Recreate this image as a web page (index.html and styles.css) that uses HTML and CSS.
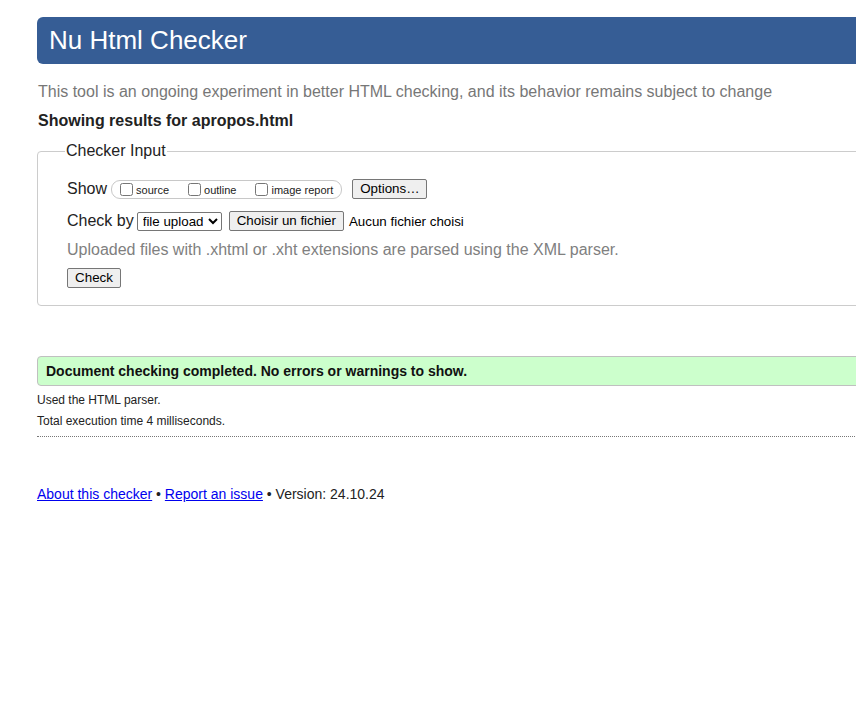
FILE: index.html
```html
<!DOCTYPE html>
<html lang="en">
<head>
<meta charset="utf-8">
<title>Nu Html Checker</title>
<link rel="stylesheet" href="styles.css">
</head>
<body>
<div class="page">
  <h1 class="banner">Nu Html Checker</h1>
  <p class="intro">This tool is an ongoing experiment in better HTML checking, and its behavior remains subject to change</p>
  <h2 class="results-for">Showing results for apropos.html</h2>
  <fieldset class="checker">
    <legend class="legend">Checker Input</legend>
    <div class="row row-show">
      <span class="row-label">Show</span>
      <span class="opts">
        <label class="opt"><input type="checkbox" class="cb"><span>source</span></label>
        <label class="opt"><input type="checkbox" class="cb"><span>outline</span></label>
        <label class="opt"><input type="checkbox" class="cb"><span>image report</span></label>
      </span>
      <button class="btn btn-options" type="button">Options…</button>
    </div>
    <div class="row row-check">
      <span class="row-label">Check by</span>
      <select class="sel"><option>file upload</option></select>
      <button class="btn btn-file" type="button">Choisir un fichier</button>
      <span class="nofile">Aucun fichier choisi</span>
    </div>
    <p class="hint">Uploaded files with .xhtml or .xht extensions are parsed using the XML parser.</p>
    <div class="row row-submit">
      <button class="btn btn-check" type="button">Check</button>
    </div>
  </fieldset>
  <p class="success">Document checking completed. No errors or warnings to show.</p>
  <p class="meta">Used the HTML parser.</p>
  <p class="meta meta2">Total execution time 4 milliseconds.</p>
  <hr class="sep">
  <p class="footer"><a href="#">About this checker</a> • <a href="#">Report an issue</a> • Version: 24.10.24</p>
</div>
</body>
</html>
```
FILE: styles.css
```css
html {
  overflow: hidden;
}
body {
  margin: 0;
  background: #fff;
  color: #222;
  font-family: "Liberation Sans", Arial, sans-serif;
}
.page {
  margin-left: 37px;
  width: 880px;
  padding-top: 17px;
}
.banner {
  margin: 0;
  height: 47px;
  line-height: 47px;
  padding-left: 12px;
  background: #365d95;
  color: #fff;
  font-size: 26px;
  font-weight: normal;
  border-radius: 6px 0 0 6px;
}
.intro {
  margin: 19px 0 0 1px;
  font-size: 16px;
  line-height: 18px;
  color: #777;
}
.results-for {
  margin: 11px 0 0 1px;
  font-size: 16px;
  line-height: 18px;
  font-weight: bold;
  color: #222;
}
.checker {
  margin: 12px 0 0 0;
  border: 1px solid #ccc;
  border-radius: 4px;
  padding: 18px 0 17px 29px;
}
.legend {
  padding: 0 1px;
  margin-left: -2px;
  font-size: 16px;
  line-height: 18px;
  color: #222;
}
.row {
  display: flex;
  align-items: center;
}
.row-label {
  font-size: 16px;
  line-height: 18px;
  color: #222;
}
.row-show {
  height: 22px;
}
.opts {
  display: inline-flex;
  align-items: center;
  margin-left: 4px;
  height: 17px;
  padding: 0 8px 0 4px;
  border: 1px solid #c8c8c8;
  border-radius: 9px;
}
.opt {
  display: inline-flex;
  align-items: center;
  font-size: 11px;
  margin-right: 15px;
}
.opt:last-child {
  margin-right: 0;
}
.opt span {
  position: relative;
  top: 1px;
}
.cb {
  margin: 0 3px 0 4px;
  width: 13px;
  height: 13px;
}
.btn {
  font-family: "Liberation Sans", Arial, sans-serif;
  font-size: 13.33px;
  color: #000;
  background: #efefef;
  border: 1px solid #767676;
  border-radius: 2px;
  padding: 1px 7px;
  height: 20px;
  line-height: 16px;
  white-space: nowrap;
}
.btn-options {
  margin-left: 10px;
  width: 75px;
}
.row-check {
  margin-top: 10px;
  height: 22px;
}
.sel {
  margin-left: 3px;
  font-family: "Liberation Sans", Arial, sans-serif;
  font-size: 13.33px;
  height: 19px;
  width: 85px;
  border: 1px solid #767676;
  border-radius: 2px;
  padding: 0 0 0 1px;
  background: #fff;
  color: #000;
}
.btn-file {
  margin-left: 7px;
  padding: 1px 7px;
}
.nofile {
  margin-left: 5px;
  font-size: 13.33px;
  color: #000;
  white-space: nowrap;
}
.hint {
  margin: 9px 0 0 0;
  font-size: 16px;
  line-height: 18px;
  color: #808080;
}
.row-submit {
  margin-top: 9px;
}
.btn-check {
  width: 54px;
  padding: 1px 6px;
}
.success {
  margin: 50px 0 0 0;
  height: 28px;
  line-height: 28px;
  padding-left: 8px;
  background: #ccffcc;
  border: 1px solid #c0c0c0;
  border-radius: 4px 0 0 4px;
  font-size: 14px;
  font-weight: bold;
  color: #111;
}
.meta {
  margin: 7px 0 0 0;
  font-size: 12px;
  line-height: 14px;
  color: #222;
}
.meta2 {
  margin-top: 7px;
}
.sep {
  margin: 8px 0 0 0;
  border: 0;
  border-top: 1px dotted #777;
  height: 0;
}
.footer {
  margin: 49px 0 0 0;
  font-size: 14px;
  line-height: 16px;
  color: #222;
}
.footer a {
  color: #0000ee;
}
```
